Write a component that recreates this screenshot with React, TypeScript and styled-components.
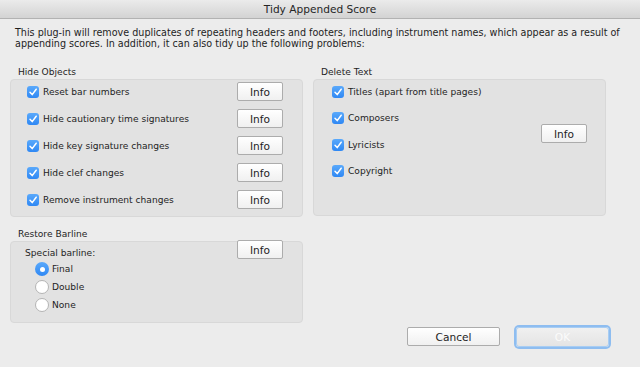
import React from 'react'
import styled, {createGlobalStyle} from 'styled-components'

const GlobalStyle = createGlobalStyle`
  html, body {
    margin: 0;
    padding: 0;
    background: #ececec;
  }
  body {
    font-family: "DejaVu Sans", "Liberation Sans", sans-serif;
    color: #1e1e1e;
  }
`

const Window = styled.div`
  width: 640px;
  height: 367px;
  display: flex;
  flex-direction: column;
  background: #ececec;
  overflow: hidden;
`

const TitleBar = styled.div`
  flex: none;
  height: 18px;
  display: flex;
  align-items: center;
  justify-content: center;
  background: linear-gradient(#ebebeb, #d3d3d3);
  border-bottom: 1px solid #b2b2b2;
  font-size: 10.6px;
  color: #262626;
`

const Body = styled.div`
  flex: 1;
  display: flex;
  flex-direction: column;
  padding: 8px 10px 0 10px;
`

const Intro = styled.p`
  margin: 0 0 0 5px;
  font-size: 9.6px;
  line-height: 11px;
`

const Columns = styled.div`
  display: grid;
  grid-template-columns: 293px 293px;
  column-gap: 10px;
  align-items: start;
  margin-top: 18px;
`

const Column = styled.div`
  display: flex;
  flex-direction: column;
`

const GroupLabel = styled.div<{$top?: number}>`
  margin: ${(p) => p.$top ?? 0}px 0 1px 8px;
  font-size: 9.1px;
  line-height: 11px;
`

const Panel = styled.div<{$h: number}>`
  box-sizing: border-box;
  height: ${(p) => p.$h}px;
  background: #e2e2e2;
  border: 1px solid #d8d8d8;
  border-radius: 4px;
  padding: 2px 19px 0 16px;
`

const RowPanel = styled(Panel)`
  display: flex;
  justify-content: space-between;
  align-items: flex-start;
  padding-left: 18px;
  padding-right: 18px;
`

const List = styled.div<{$gap: number}>`
  display: flex;
  flex-direction: column;
  gap: ${(p) => p.$gap}px;
`

const Row = styled.div`
  height: 19px;
  display: flex;
  align-items: center;
  justify-content: space-between;
`

const Check = styled.label`
  display: flex;
  align-items: center;
  gap: 4px;
  font-size: 9.1px;
`

const Box = styled.span`
  width: 12px;
  height: 12px;
  border-radius: 3px;
  background: linear-gradient(#5aa9fb, #2f88f4);
  display: flex;
  align-items: center;
  justify-content: center;
`

const Button = styled.button<{$w: number}>`
  box-sizing: border-box;
  width: ${(p) => p.$w}px;
  height: 19px;
  padding: 0;
  background: linear-gradient(#ffffff, #f0f0f0);
  border: 1px solid #acacac;
  border-radius: 2px;
  font-family: "DejaVu Sans", sans-serif;
  font-size: 10.6px;
  color: #1e1e1e;
`

const DefaultButton = styled(Button)`
  height: 20px;
  color: #fbfbfb;
  background: linear-gradient(#f0f0f0, #e4e4e4);
  border-color: #a8cdf3;
  box-shadow: 0 0 0 2px #8ebdf0;
  border-radius: 3px;
`

const SideButton = styled(Button)<{$mt: number}>`
  margin-top: ${(p) => p.$mt}px;
`

const BarlinePanel = styled(Panel)`
  display: flex;
  justify-content: space-between;
  align-items: flex-start;
  padding: 6px 19px 0 14px;
`

const SubLabel = styled.div`
  font-size: 9.1px;
  line-height: 11px;
  margin-bottom: 3px;
`

const Radios = styled.div`
  display: flex;
  flex-direction: column;
  gap: 4px;
  padding-left: 10px;
`

const Radio = styled.label`
  height: 14px;
  display: flex;
  align-items: center;
  gap: 3px;
  font-size: 9.1px;
`

const Dot = styled.span<{$on?: boolean}>`
  box-sizing: border-box;
  width: 14px;
  height: 14px;
  border-radius: 50%;
  display: flex;
  align-items: center;
  justify-content: center;
  background: ${(p) => (p.$on ? 'linear-gradient(#5aa9fb, #2f88f4)' : '#ffffff')};
  border: ${(p) => (p.$on ? 'none' : '1px solid #b4b4b4')};
  &::after {
    content: '';
    width: 5px;
    height: 5px;
    border-radius: 50%;
    background: #fff;
    display: ${(p) => (p.$on ? 'block' : 'none')};
  }
`

const Footer = styled.div`
  display: flex;
  justify-content: flex-end;
  gap: 16px;
  padding: 4px 21px 0 0;
`

const Tick = () => (
  <svg width="10" height="10" viewBox="0 0 10 10">
    <path d="M2 5.3 L4.2 7.6 L8.2 2.2" fill="none" stroke="#fff" strokeWidth="1.5" strokeLinecap="round" strokeLinejoin="round" />
  </svg>
)

const CheckItem = ({label}: {label: string}) => (
  <Check>
    <Box>
      <Tick />
    </Box>
    {label}
  </Check>
)

const hideItems = [
  'Reset bar numbers',
  'Hide cautionary time signatures',
  'Hide key signature changes',
  'Hide clef changes',
  'Remove instrument changes',
]

const deleteItems = ['Titles (apart from title pages)', 'Composers', 'Lyricists', 'Copyright']

const App = () => {
  return (
    <Window>
      <GlobalStyle />
      <TitleBar>Tidy Appended Score</TitleBar>
      <Body>
        <Intro>
          This plug-in will remove duplicates of repeating headers and footers, including instrument names, which appear as a result of
          appending scores. In addition, it can also tidy up the following problems:
        </Intro>
        <Columns>
          <Column>
            <GroupLabel>Hide Objects</GroupLabel>
            <Panel $h={138}>
              <List $gap={8}>
                {hideItems.map((item) => (
                  <Row key={item}>
                    <CheckItem label={item} />
                    <Button $w={46}>Info</Button>
                  </Row>
                ))}
              </List>
            </Panel>
            <GroupLabel $top={12}>Restore Barline</GroupLabel>
            <BarlinePanel $h={82}>
              <div>
                <SubLabel>Special barline:</SubLabel>
                <Radios>
                  <Radio>
                    <Dot $on />
                    Final
                  </Radio>
                  <Radio>
                    <Dot />
                    Double
                  </Radio>
                  <Radio>
                    <Dot />
                    None
                  </Radio>
                </Radios>
              </div>
              <SideButton $w={46} $mt={-8}>
                Info
              </SideButton>
            </BarlinePanel>
          </Column>
          <Column>
            <GroupLabel>Delete Text</GroupLabel>
            <RowPanel $h={137}>
              <List $gap={7.5}>
                {deleteItems.map((item) => (
                  <Row key={item}>
                    <CheckItem label={item} />
                  </Row>
                ))}
              </List>
              <SideButton $w={46} $mt={42}>
                Info
              </SideButton>
            </RowPanel>
          </Column>
        </Columns>
        <Footer>
          <Button $w={93}>Cancel</Button>
          <DefaultButton $w={93}>OK</DefaultButton>
        </Footer>
      </Body>
    </Window>
  )
}

export default App
